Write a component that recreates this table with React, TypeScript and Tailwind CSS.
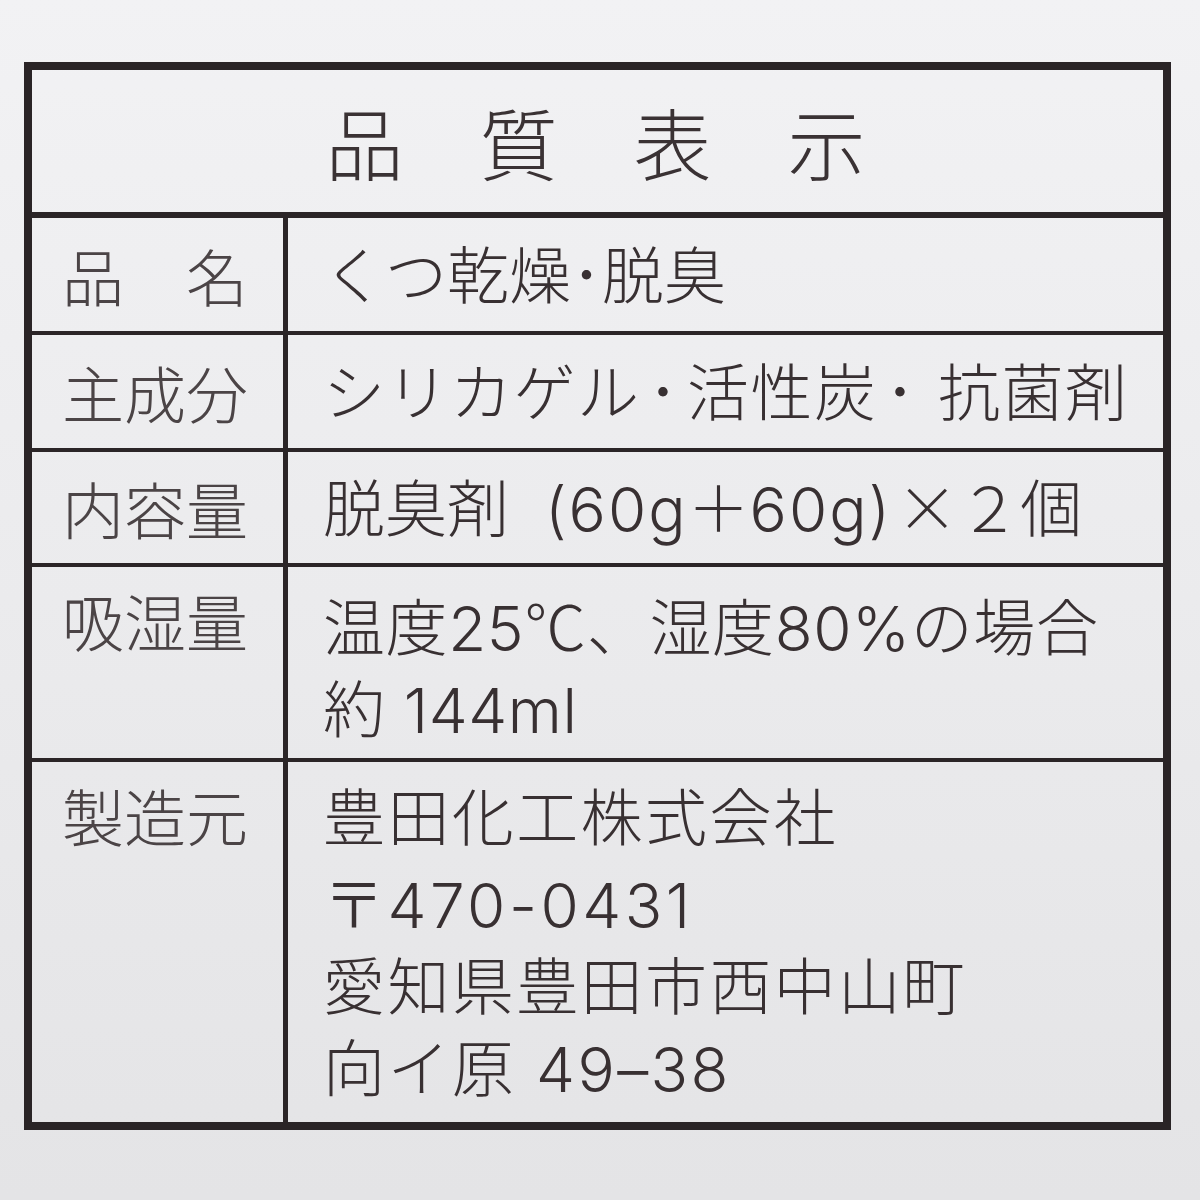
import type { ReactNode } from "react";

const jp = { fontFamily: '"Noto Sans CJK JP", "Noto Sans", sans-serif' };
const mixed = { fontFamily: 'Inter, "Noto Sans CJK JP", sans-serif' };

function J({ children }: { children: ReactNode }) {
  return <span style={jp}>{children}</span>;
}

function Label({ chars, spread }: { chars: string[]; spread?: boolean }) {
  return (
    <div className={`flex w-[186px] text-[62px] leading-none text-[#4b4446] ${spread ? "justify-between" : ""}`}>
      {chars.map((c, i) => (
        <span key={i}>{c}</span>
      ))}
    </div>
  );
}

function Row({
  label,
  spread,
  lines,
  height,
  top,
  last,
  track = "",
}: {
  label: string[];
  spread?: boolean;
  lines: ReactNode[];
  height: string;
  top?: boolean;
  last?: boolean;
  track?: string;
}) {
  return (
    <div className={`flex ${height} ${last ? "" : "border-b-[4px] border-[#2b2527]"}`}>
      <div
        className={`w-[256px] shrink-0 border-r-[5px] border-[#2b2527] pl-[30px] flex ${
          top ? "items-start pt-[22px]" : "items-center"
        }`}
      >
        <Label chars={label} spread={spread} />
      </div>
      <div
        className={`flex-1 pl-[35px] flex flex-col ${top ? "justify-start pt-[16px]" : "justify-center"} text-[62px] leading-[82px] text-[#383032] ${track}`}
        style={mixed}
      >
        {lines.map((l, i) => (
          <div key={i} className="whitespace-pre">
            {l}
          </div>
        ))}
      </div>
    </div>
  );
}

export default function App() {
  return (
    <div
      className="w-[1200px] h-[1200px] overflow-hidden bg-gradient-to-b from-[#f2f2f4] via-[#ebebed] to-[#e4e4e6] pt-[62px] pl-[24px] font-light"
      style={jp}
    >
      <div className="w-[1147px] h-[1068px] border-[8px] border-[#2a2426] flex flex-col">
        <div className="h-[148px] shrink-0 border-b-[6px] border-[#2b2527] flex items-center justify-center gap-[76px] text-[78px] leading-none text-[#3a3234] pr-[4px]">
          <span>品</span>
          <span>質</span>
          <span>表</span>
          <span>示</span>
        </div>
        <Row
          label={["品", "名"]}
          spread
          lines={[
            <>
              くつ乾燥<J>･</J>脱臭
            </>,
          ]}
          height="h-[117px]"
        />
        <Row
          label={["主", "成", "分"]}
          track="tracking-[1.5px]"
          lines={[
            <>
              シリカゲル<span className="mx-[7px]" style={jp}>･</span>活性炭
              <span className="mx-[7px]" style={jp}>･</span>
              <span className="inline-block w-[14px]" />抗菌剤
            </>,
          ]}
          height="h-[117px]"
        />
        <Row
          label={["内", "容", "量"]}
          lines={[
            <>
              脱臭剤<span className="inline-block w-[36px]" />
              <span className="tracking-[2px]">(60g</span>
              <J>＋</J>
              <span className="tracking-[2px]">60g)</span>
              <span className="inline-block w-[4px]" />
              <J>×２個</J>
            </>,
          ]}
          height="h-[115px]"
        />
        <Row
          label={["吸", "湿", "量"]}
          top
          track="tracking-[0.6px]"
          lines={[
            <>
              温度25<J>℃、</J>湿度80%<J>の場合</J>
            </>,
            <>約 144ml</>,
          ]}
          height="h-[195px]"
        />
        <Row
          label={["製", "造", "元"]}
          top
          last
          track="tracking-[2.4px]"
          lines={[
            "豊田化工株式会社",
            <>
              <J>〒</J>
              <span className="tracking-[3.5px]">470-0431</span>
            </>,
            "愛知県豊田市西中山町",
            <>向イ原 49–38</>,
          ]}
          height="flex-1"
        />
      </div>
    </div>
  );
}
